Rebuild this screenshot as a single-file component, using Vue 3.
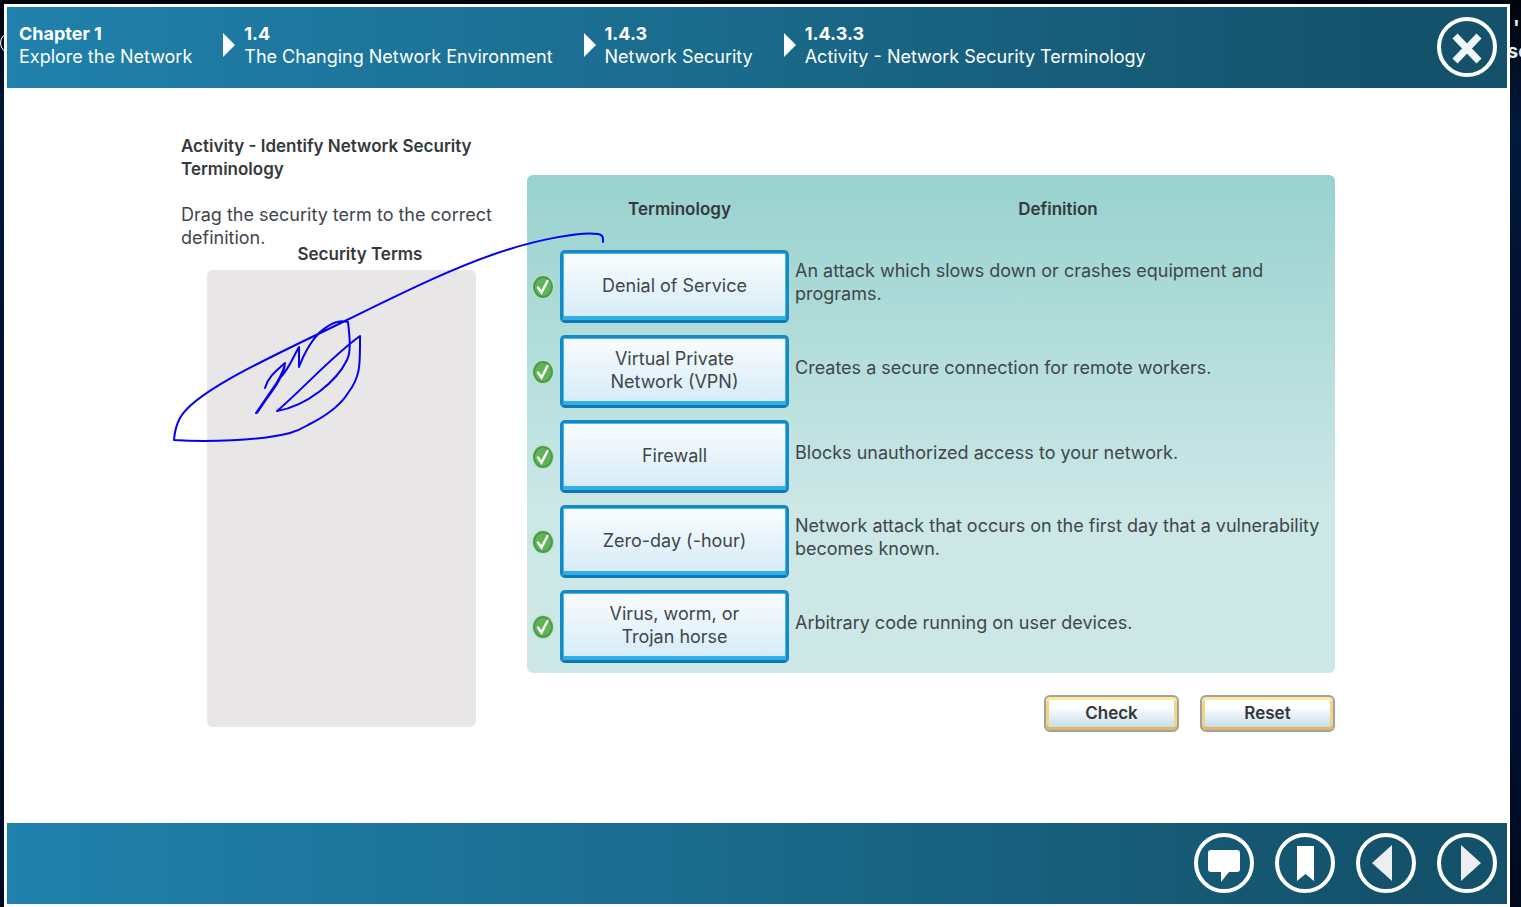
<script setup>
const crumbs = [
  { no: 'Chapter 1', name: 'Explore the Network' },
  { no: '1.4', name: 'The Changing Network Environment' },
  { no: '1.4.3', name: 'Network Security' },
  { no: '1.4.3.3', name: 'Activity - Network Security Terminology' },
]
const rows = [
  { term: ['Denial of Service'], text: 'An attack which slows down or crashes equipment and programs.' },
  { term: ['Virtual Private', 'Network (VPN)'], text: 'Creates a secure connection for remote workers.' },
  { term: ['Firewall'], text: 'Blocks unauthorized access to your network.' },
  { term: ['Zero-day (-hour)'], text: 'Network attack that occurs on the first day that a vulnerability becomes known.' },
  { term: ['Virus, worm, or', 'Trojan horse'], text: 'Arbitrary code running on user devices.' },
]
</script>

<template>
  <div class="desktop">
    <span class="backdrop-ring"></span>
    <span class="backdrop-text"><span>'</span><span>so</span></span>
    <div class="window">
      <header class="bar">
        <nav aria-label="Breadcrumb">
          <ol class="crumbs">
            <li v-for="(c, i) in crumbs" :key="c.no" class="crumb">
              <svg v-if="i" class="sep" viewBox="0 0 12 24" aria-hidden="true"><path d="M0 0 12 12 0 24Z" /></svg>
              <a href="#"><b>{{ c.no }}</b><span>{{ c.name }}</span></a>
            </li>
          </ol>
        </nav>
        <button class="round" type="button" aria-label="Close">
          <svg viewBox="0 0 60 60"><path d="M18 19 42 44M42 19 18 44" fill="none" stroke="#f1f5f7" stroke-width="7" /></svg>
        </button>
      </header>

      <main class="content">
        <div class="activity">
          <section class="intro">
            <h1>Activity - Identify Network Security Terminology</h1>
            <p>Drag the security term to the correct definition.</p>
            <h2>Security Terms</h2>
            <div class="terms"></div>
          </section>

          <section class="board-column">
            <table class="board">
              <thead>
                <tr class="row head">
                  <td></td>
                  <th scope="col">Terminology</th>
                  <th scope="col">Definition</th>
                </tr>
              </thead>
              <tbody>
                <tr v-for="r in rows" :key="r.text" class="row">
                  <td class="tick">
                    <svg viewBox="0 0 22 24" role="img" aria-label="Correct">
                      <ellipse cx="11" cy="12" rx="11" ry="12" fill="#b9e2c4" />
                      <ellipse cx="11" cy="12" rx="10" ry="11" fill="#469c48" />
                      <ellipse cx="11" cy="12" rx="8" ry="9" fill="#62b25a" />
                      <path d="M6 12.500 9.500 17.500 15.500 6" fill="none" stroke="#f8fcf5" stroke-width="2.500" stroke-linecap="round" />
                    </svg>
                  </td>
                  <td><div class="card"><span v-for="t in r.term" :key="t">{{ t }}</span></div></td>
                  <td class="definition">{{ r.text }}</td>
                </tr>
              </tbody>
            </table>
            <div class="actions">
              <button type="button">Check</button>
              <button type="button">Reset</button>
            </div>
          </section>

          <svg class="ink" viewBox="0 0 450 230" aria-hidden="true">
            <path d="M443 15V12Q443 8 438 7C420 4 375 14 350 22C300 37 240 67 187 93C120 126 35 163 20 191Q15 200 14 213C45 215 100 214 130 206C137 204 143 201 148 198C164 190 180 179 188 166C201 149 200 137 200 109C171 130 144 161 117 184C147 179 177 154 187 133C191 125 190 112 188 95C184 94 181 94 177 95C171 96 165 101 160 105C151 114 145 124 139 140V120C132 132 129 142 120 151L96 186C106 172 124 152 125 136C124 146 112 164 97 186M125 136C116 144 108 150 105 161" />
          </svg>
        </div>
      </main>

      <footer class="bar tools">
        <button class="round" type="button" aria-label="Comments">
          <svg viewBox="0 0 60 60"><path d="M17 17H43Q46 17 46 20V36Q46 39 43 39H35L27 49V39H17Q14 39 14 36V20Q14 17 17 17Z" /></svg>
        </button>
        <button class="round" type="button" aria-label="Bookmark">
          <svg viewBox="0 0 60 60"><path d="M22 13H39V48L30.500 41 22 48Z" /></svg>
        </button>
        <button class="round" type="button" aria-label="Previous">
          <svg viewBox="0 0 60 60"><path d="M36 12V48L16 30Z" fill="#ebeff2" /></svg>
        </button>
        <button class="round" type="button" aria-label="Next">
          <svg viewBox="0 0 60 60"><path d="M24 12V48L44 30Z" fill="#ebeff2" /></svg>
        </button>
      </footer>
    </div>
  </div>
</template>

<style>
body { margin: 0; }
</style>

<style scoped>
* { box-sizing: border-box; }
.desktop {
  position: relative;
  display: flex;
  min-height: 100vh;
  padding: 4px 11px 0 4px;
  overflow: hidden;
  background: linear-gradient(#02040b, #021a3c 14%, #020f30 40%, #011038 70%, #010b1c);
  font: 18px/23px Inter, "Liberation Sans", sans-serif;
  color: #40464a;
}
.window {
  position: relative;
  flex: 1;
  display: flex;
  flex-direction: column;
  min-width: 0;
  border: 3px solid #fff;
  background: #fff;
}
.backdrop-ring {
  position: absolute;
  top: 32px;
  left: 0;
  width: 22px;
  height: 22px;
  border: 1px solid #fff;
  border-radius: 50%;
}
.backdrop-text {
  position: absolute;
  top: 17px;
  left: calc(100% - 14px);
  display: flex;
  flex-direction: column;
  font-weight: 700;
  font-size: 20px;
  color: #e8eaee;
}
.backdrop-text span:first-child { padding-left: 6px; }
.bar {
  display: flex;
  align-items: center;
  justify-content: space-between;
  min-height: 81px;
  padding: 9px 10px 11px 12px;
  background: linear-gradient(90deg, #2081ac, #1a698a 50%, #14526b 92%);
}
.crumbs {
  display: flex;
  flex-wrap: wrap;
  gap: 0 31px;
  margin: 0;
  padding: 0 0 4px;
  list-style: none;
}
.crumb { display: flex; align-items: center; gap: 9px; }
.crumb a { display: flex; flex-direction: column; color: #fff; text-decoration: none; }
.sep { width: 12px; height: 24px; fill: #fff; }
.round {
  flex: none;
  width: 60px;
  height: 60px;
  padding: 0;
  border: 4px solid #fff;
  border-radius: 50%;
  background: none;
}
.round svg { display: block; width: 60px; height: 60px; margin: -4px; fill: #fff; }
.tools { justify-content: flex-end; gap: 21px; }
.content { flex: 1; padding: 47px 23px 46px 25px; }
.activity {
  position: relative;
  display: grid;
  grid-template-columns: 316px minmax(0, 1fr);
  gap: 30px;
  max-width: 1154px;
  margin: 0 auto;
}
h1, h2, th { margin: 0; font-size: 17px; line-height: 23px; font-weight: 600; color: #36393c; }
.intro p { margin: 22px 0 0; }
.intro h2 { margin-top: -6px; padding-left: 42px; text-align: center; }
.terms { height: 457px; margin: 4px 21px 0 26px; border-radius: 6px; background: #e8e6e7; }
.board-column { padding-top: 40px; }
.board {
  display: block;
  padding: 23px 14px 10px 5px;
  border-radius: 6px;
  background: linear-gradient(#98d2cf, #cbe7e6 66%, #cde7e6);
}
thead, tbody { display: flex; flex-direction: column; gap: 12px; }
tbody { padding-top: 29px; }
.row { display: grid; grid-template-columns: 22px 229px minmax(0, 1fr); gap: 6px; align-items: center; }
.row td, .row th { padding: 0; }
.row th:nth-child(2) { padding-left: 10px; }
.tick svg { display: block; width: 22px; height: 24px; }
.card {
  display: flex;
  flex-direction: column;
  justify-content: center;
  align-items: center;
  height: 73px;
  border: 3px solid #1589c6;
  border-bottom-color: #0f78b0;
  border-radius: 5px;
  background: linear-gradient(#fafcfe, #d4ebf7);
  box-shadow: inset 0 -4px #2fb0e8, inset 0 0 0 1px #49b8ea;
  padding-bottom: 3px;
}
.row .definition { padding-bottom: 9px; }
.actions { display: flex; justify-content: flex-end; gap: 21px; padding-top: 22px; }
.actions button {
  width: 135px;
  height: 37px;
  padding: 0;
  border: 2px solid #a3a09d;
  border-radius: 6px;
  background: linear-gradient(#fff 30%, #bcd8e9) padding-box;
  box-shadow: inset 0 -3px #e2b765, inset 0 3px #fbec9c, inset 0 0 0 3px #f2d584;
  font: 600 17px/23px Inter, "Liberation Sans", sans-serif;
  color: #33373a;
}
.ink {
  position: absolute;
  top: 92px;
  left: -21px;
  width: 450px;
  height: 230px;
  fill: none;
  stroke: #0500ee;
  stroke-width: 2;
  stroke-linejoin: round;
  stroke-linecap: round;
  pointer-events: none;
}
</style>
